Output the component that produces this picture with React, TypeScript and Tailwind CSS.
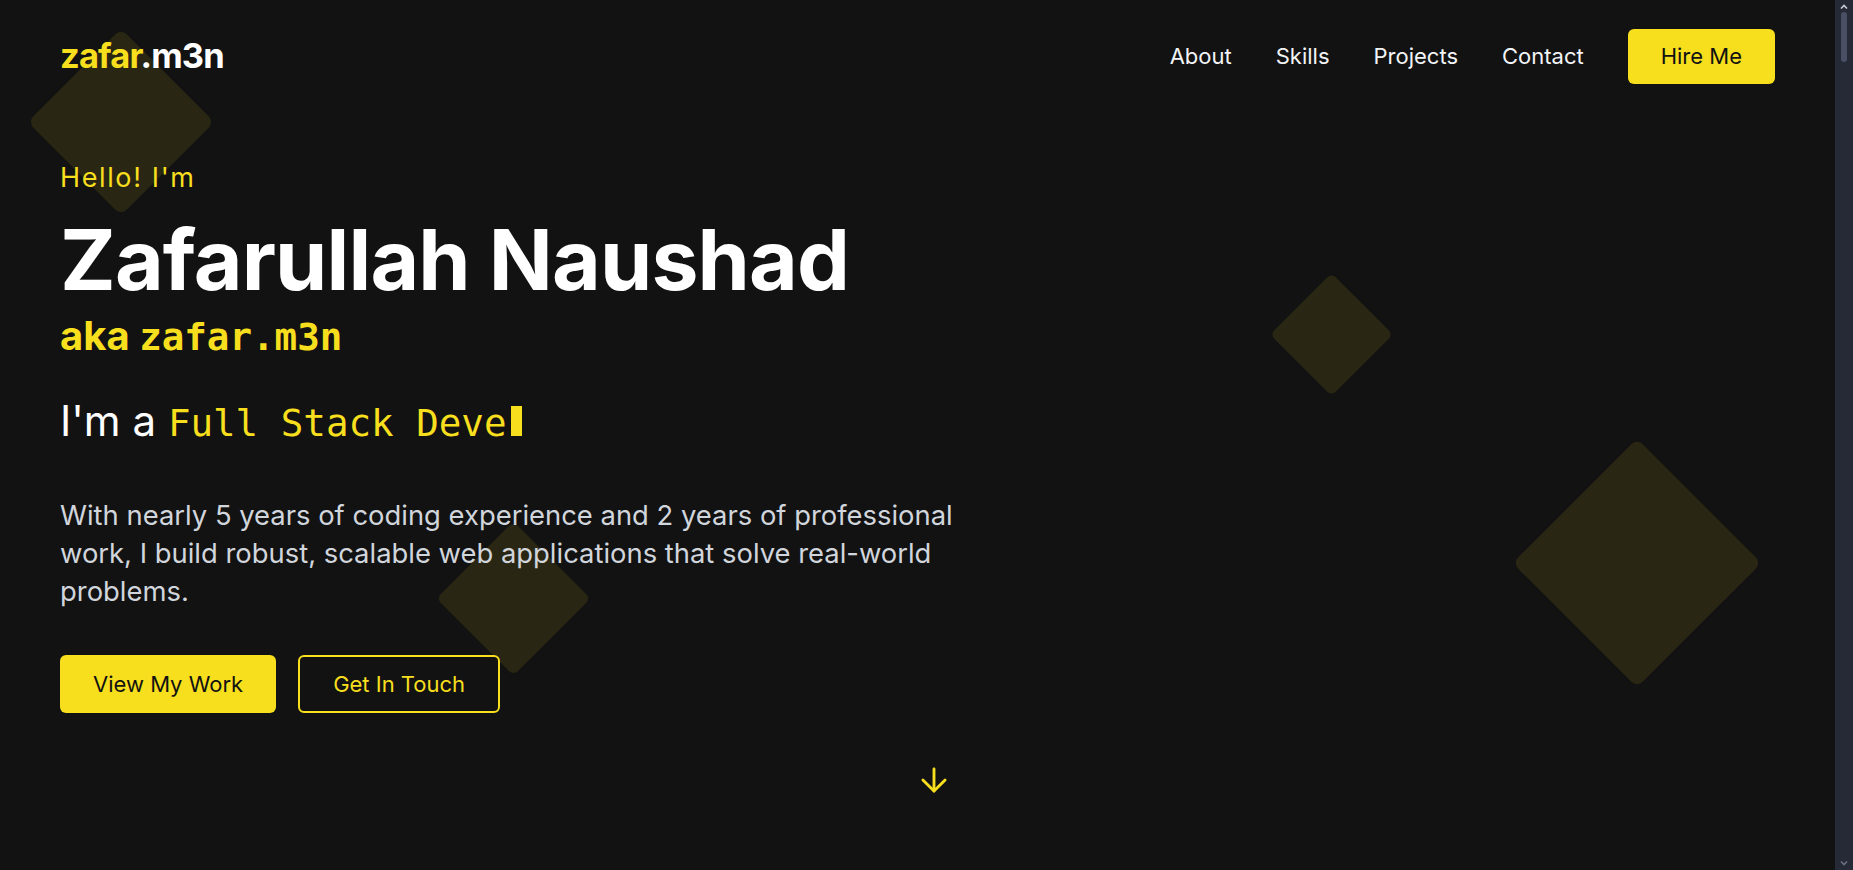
import { ArrowDown } from "lucide-react";

const navLinks = ["About", "Skills", "Projects", "Contact"];

const sans = { fontFamily: "Inter, 'Noto Sans', sans-serif" };

function Diamond({ className }: { className: string }) {
  return <div className={`absolute rotate-45 bg-[#f7df1e]/10 ${className}`} />;
}

function Header() {
  return (
    <header className="relative z-10 flex h-[112px] items-center justify-between px-[60px]">
      <a href="#" className="text-[34.5px] font-bold leading-none tracking-tight">
        <span className="text-[#f7df1e]">zafar</span>
        <span className="text-white">.m3n</span>
      </a>
      <nav className="flex items-center gap-[44px]">
        {navLinks.map((link) => (
          <a key={link} href={`#${link.toLowerCase()}`} className="text-[22px] text-gray-100">
            {link}
          </a>
        ))}
        <a
          href="#contact"
          className="flex h-[55px] items-center rounded-md bg-[#f7df1e] px-[33px] text-[22px] text-[#121212]"
        >
          Hire Me
        </a>
      </nav>
    </header>
  );
}

function Hero() {
  return (
    <section className="relative z-10 px-[60px]">
      <p className="mt-[50px] text-[27px] leading-[32px] tracking-[0.06em] text-[#f7df1e]">Hello! I'm</p>
      <h1 className="mt-[24px] text-[84px] font-bold leading-[84px] tracking-[-0.01em] text-white">
        Zafarullah Naushad
      </h1>
      <h2 className="mt-[10px] text-[40px] font-bold leading-[48px] text-[#f7df1e]">
        aka{" "}
        <span className="font-['DejaVu_Sans_Mono',monospace] text-[37.5px]">zafar.m3n</span>
      </h2>
      <p className="mt-[36px] text-[42px] leading-[48px] text-white">
        I'm a{" "}
        <span className="font-['DejaVu_Sans_Mono',monospace] text-[37.5px] text-[#f7df1e]">Full Stack Deve</span>
        <span className="ml-[4px] inline-block h-[30px] w-[11px] bg-[#f7df1e]" />
      </p>
      <p className="mt-[49px] max-w-[920px] text-[27.4px] leading-[38px] text-gray-300">
        With nearly 5 years of coding experience and 2 years of professional work, I build robust, scalable web
        applications that solve real-world problems.
      </p>
      <div className="mt-[45px] flex gap-[22px]">
        <a
          href="#projects"
          className="flex h-[58px] items-center rounded-md bg-[#f7df1e] px-[33px] text-[22px] text-[#121212]"
        >
          View My Work
        </a>
        <a
          href="#contact"
          className="flex h-[58px] items-center rounded-md border-2 border-[#f7df1e] px-[33px] text-[22px] text-[#f7df1e]"
        >
          Get In Touch
        </a>
      </div>
    </section>
  );
}

function ScrollRail() {
  return (
    <aside className="flex w-[18px] shrink-0 flex-col items-center bg-[#262936] pb-[4px] pt-[4px]">
      <svg width="8" height="5" viewBox="0 0 8 5" className="text-[#c9cbd6]">
        <path d="M1 4.5 4 1.5l3 3" fill="none" stroke="currentColor" strokeWidth="1.6" />
      </svg>
      <div className="mt-[3px] h-[50px] w-[6px] rounded-full bg-[#4b4f66]" />
      <div className="flex-1" />
      <svg width="8" height="5" viewBox="0 0 8 5" className="text-[#6b6f82]">
        <path d="M1 .5l3 3 3-3" fill="none" stroke="currentColor" strokeWidth="1.6" />
      </svg>
    </aside>
  );
}

export default function App() {
  return (
    <div style={sans} className="flex h-screen w-full overflow-hidden bg-[#121212]">
      <main className="relative min-w-0 flex-1 overflow-hidden">
        <Diamond className="left-[55px] top-[56px] h-[132px] w-[132px] rounded-lg" />
        <Diamond className="left-[1288px] top-[291px] h-[87px] w-[87px] rounded-md" />
        <Diamond className="left-[1549px] top-[475px] h-[176px] w-[176px] rounded-lg" />
        <Diamond className="left-[459px] top-[544px] h-[109px] w-[109px] rounded-md" />

        <Header />
        <Hero />

        <a href="#about" className="absolute left-[915px] top-[761px] text-[#f7df1e]">
          <ArrowDown size={38} strokeWidth={1.8} />
        </a>
      </main>
      <ScrollRail />
    </div>
  );
}
